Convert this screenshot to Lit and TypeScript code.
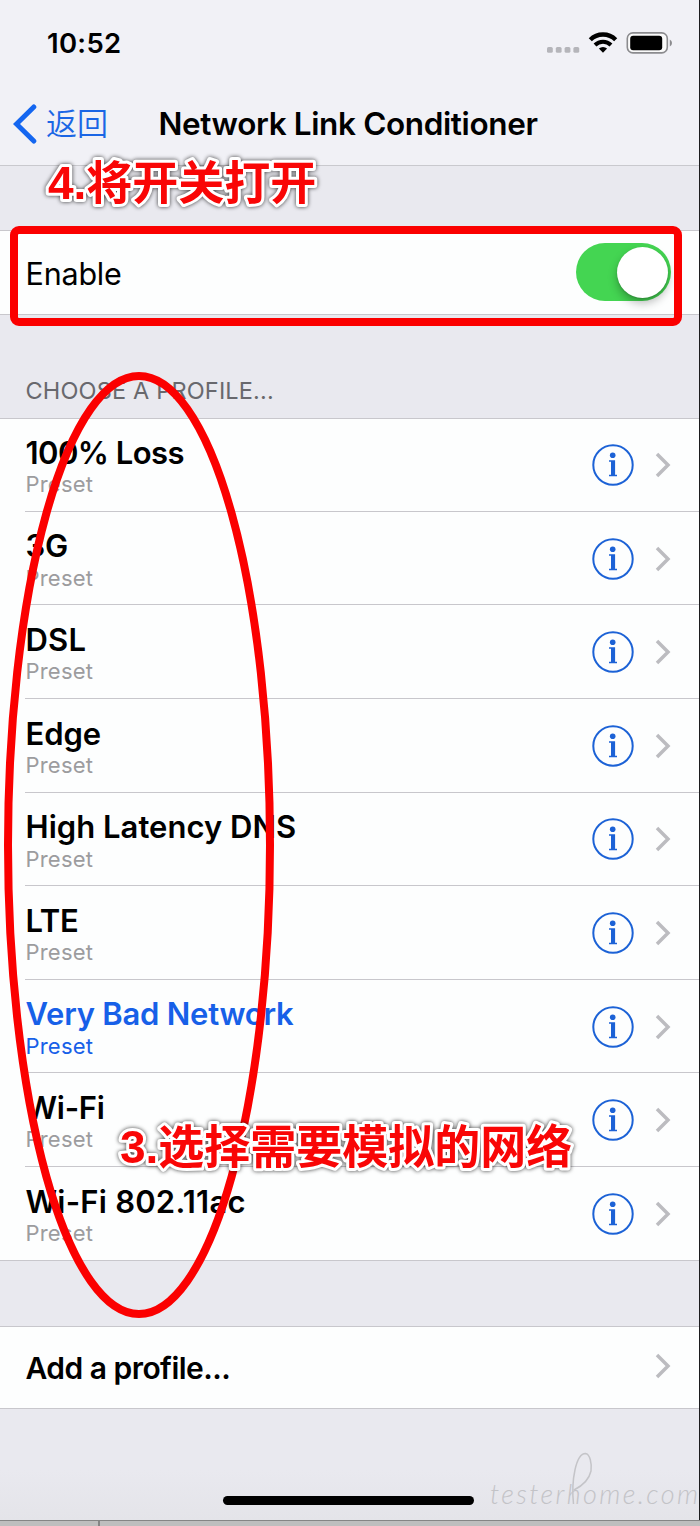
import { LitElement, html, css, svg } from "lit";
import { customElement, property } from "lit/decorators.js";
import { styleMap } from "lit/directives/style-map.js";

interface Profile {
  name: string;
  tracking: number;
  selected?: boolean;
}

const PROFILES: Profile[] = [
  { name: "100% Loss", tracking: -0.55 },
  { name: "3G", tracking: -0.1 },
  { name: "DSL", tracking: 0.2 },
  { name: "Edge", tracking: -0.1 },
  { name: "High Latency DNS", tracking: 0.03 },
  { name: "LTE", tracking: -0.3 },
  { name: "Very Bad Network", tracking: -0.23, selected: true },
  { name: "Wi-Fi", tracking: -0.3 },
  { name: "Wi-Fi 802.11ac", tracking: 0.22 },
];

const chevron = html`<svg class="chevron" width="16" height="26" viewBox="0 0 16 26">
  <path d="M2 2 L13 13 L2 24" fill="none" stroke="#bcbcc0" stroke-width="3.5" />
</svg>`;

@customElement("profile-row")
class ProfileRow extends LitElement {
  @property({ attribute: false }) profile!: Profile;

  static styles = css`
    :host {
      display: flex;
      box-sizing: border-box;
      height: 93.6px;
      padding-left: 25px;
    }
    .line {
      flex: 1;
      display: flex;
      align-items: center;
      border-bottom: 1px solid #c8c7cc;
      padding-right: 28px;
    }
    :host([last]) .line {
      border-bottom-color: transparent;
    }
    .text {
      flex: 1;
      padding: 4px 0 0 0.5px;
    }
    .name {
      font-size: 31px;
      line-height: 36px;
      font-weight: 600;
      white-space: nowrap;
    }
    .kind {
      font-size: 22px;
      line-height: 28px;
      margin-top: -0.6px;
      letter-spacing: 0.2px;
      color: #9c9c9e;
    }
    .selected,
    .selected .kind {
      color: #1760e8;
    }
    svg {
      display: block;
      margin-top: 1.2px;
    }
    .info {
      margin-right: 21px;
    }
  `;

  render() {
    const p = this.profile;
    return html`<div class="line">
      <div class="text ${p.selected ? "selected" : ""}">
        <div class="name" style=${styleMap({ letterSpacing: `${p.tracking}px` })}>${p.name}</div>
        <div class="kind">Preset</div>
      </div>
      <svg class="info" width="42" height="42" viewBox="0 0 42 42">
        <circle cx="21" cy="21" r="19.7" fill="none" stroke="#1c62d6" stroke-width="2" />
        <circle cx="20.7" cy="11.3" r="2.8" fill="#1c62d6" />
        <path d="M17 16.3H23.1V30.8H25V32.3H17V30.8H19V17.8H17Z" fill="#1c62d6" />
      </svg>
      ${chevron}
    </div>`;
  }
}

@customElement("app-root")
class AppRoot extends LitElement {
  static styles = css`
    :host {
      display: block;
      position: relative;
      box-sizing: border-box;
      width: 700px;
      height: 1526px;
      overflow: hidden;
      background: #e9e9ef;
      color: #000;
      font-family: Inter, "Noto Sans CJK SC", sans-serif;
    }
    .screen {
      display: flex;
      flex-direction: column;
      box-sizing: border-box;
      height: 1520px;
      border-right: 1px solid #1c1c1e;
    }
    .top {
      box-sizing: border-box;
      height: 166px;
      background: #f1f1f6;
      border-bottom: 1px solid #c9c9ce;
    }
    .status {
      box-sizing: border-box;
      height: 82px;
      padding: 4px 26px 0 47px;
      display: flex;
      align-items: center;
      justify-content: space-between;
    }
    .time {
      font-size: 27.5px;
      font-weight: 600;
      letter-spacing: 0.3px;
    }
    .nav {
      display: grid;
      grid-template-columns: 158.5px 1fr;
      height: 83px;
      align-items: center;
    }
    .back {
      display: flex;
      align-items: center;
      gap: 9px;
      padding-left: 13px;
      color: #1b66e5;
      font-family: "Noto Sans CJK SC", sans-serif;
      font-size: 31px;
      font-weight: 350;
      line-height: 40px;
    }
    .back-text {
      padding-bottom: 4px;
    }
    .title {
      font-size: 31.5px;
      font-weight: 600;
      letter-spacing: -0.37px;
      white-space: nowrap;
    }
    .group {
      background: #fdfefe;
      border-top: 1px solid #c8c7cc;
      border-bottom: 1px solid #c8c7cc;
      box-sizing: border-box;
      flex: none;
    }
    .enable {
      margin-top: 64px;
      height: 85px;
      padding: 0 28px 0 25.5px;
      display: flex;
      align-items: center;
      justify-content: space-between;
      font-size: 30.5px;
    }
    .enable-text {
      padding-top: 1px;
      letter-spacing: -0.2px;
    }
    .switch {
      box-sizing: border-box;
      width: 95.5px;
      height: 58px;
      border-radius: 29px;
      background: #44d552;
      padding: 4px 3.5px 4px 4px;
      display: flex;
      justify-content: flex-end;
      margin-bottom: 1px;
    }
    .knob {
      width: 51px;
      height: 51px;
      border-radius: 50%;
      background: #fff;
      box-shadow: 0 5px 10px rgba(0, 0, 0, 0.28), 0 1px 2px rgba(0, 0, 0, 0.15);
    }
    .header {
      box-sizing: border-box;
      height: 103px;
      padding: 61px 0 0 25.5px;
      font-size: 23.5px;
      letter-spacing: 0.17px;
      line-height: 30px;
      color: #68686d;
      flex: none;
    }
    .list {
      height: 843px;
      overflow: hidden;
    }
    .rows {
      margin-top: -0.8px;
    }
    .add {
      margin-top: 65px;
      height: 83px;
      padding: 0 28px 3px 25.5px;
      display: flex;
      align-items: center;
      justify-content: space-between;
      font-size: 30px;
      font-weight: 600;
    }
    .add-text {
      letter-spacing: -0.53px;
      padding-top: 3px;
    }
    .foot {
      flex: 1;
      display: grid;
      grid-template-columns: 223px 251px 1fr;
      align-items: end;
      background: linear-gradient(#e9e9ef 55%, #e4e4e9);
    }
    .home {
      grid-column: 2;
      height: 9px;
      border-radius: 5px;
      background: #000;
      margin-bottom: 15px;
    }
    .desk {
      box-sizing: border-box;
      height: 6px;
      border-top: 1px solid #858585;
      background: linear-gradient(90deg, transparent 98px, #858585 98px, #858585 100px, transparent 100px) #bebebe;
    }
    .marks {
      position: absolute;
      left: 0;
      top: 0;
    }
    .callout {
      font-family: "Liberation Sans", "Noto Sans CJK SC", sans-serif;
      font-weight: 700;
      font-size: 46px;
      fill: #f90606;
      stroke: #fff;
      stroke-width: 6px;
      stroke-linejoin: round;
      paint-order: stroke fill;
      filter: drop-shadow(0 0.5px 2px rgba(0, 0, 0, 0.75));
    }
    .water {
      font-family: Lato, sans-serif;
      font-weight: 300;
      font-style: italic;
      font-size: 27px;
      fill: #c3c3c7;
    }
    svg {
      display: block;
    }
  `;

  render() {
    return html`
      <div class="screen">
        <div class="top">
          <div class="status">
            <span class="time">10:52</span>
            <svg width="126" height="26" viewBox="0 0 126 26">
              <g fill="#b5b5ba">
                ${[0, 8.8, 17.6, 26.4].map((x) => svg`<rect x=${x} y="17" width="5.8" height="5.8" rx="1.6" />`)}
              </g>
              <g fill="none" stroke="#000">
                <path d="M43.3 9.8 A18 18 0 0 1 68.7 9.8" stroke-width="4.4" />
                <path d="M48 15 A11.5 11.5 0 0 1 64 15" stroke-width="4" />
              </g>
              <path d="M51.9 18.6 A6 6 0 0 1 60.1 18.6 L56 22.8Z" fill="#000" />
              <rect x="80.3" y="2.9" width="40" height="20" rx="5.6" fill="#fafafa" stroke="#8b8b8e" stroke-width="1.6" />
              <rect x="83.2" y="5.8" width="32" height="14.4" rx="3" fill="#000" />
              <path d="M122.8 9.5 Q125 10.5 125 13 Q125 15.5 122.8 16.5Z" fill="#8b8b8e" />
            </svg>
          </div>
          <div class="nav">
            <div class="back">
              <svg width="24" height="40" viewBox="0 0 24 40">
                <path d="M20.8 3 L3.5 20 L20.8 37" fill="none" stroke="#1466f0" stroke-width="5" stroke-linecap="round" stroke-linejoin="miter" />
              </svg>
              <span class="back-text">返回</span>
            </div>
            <div class="title">Network Link Conditioner</div>
          </div>
        </div>
        <div class="group enable">
          <span class="enable-text">Enable</span>
          <div class="switch"><div class="knob"></div></div>
        </div>
        <div class="header">CHOOSE A PROFILE...</div>
        <div class="group list">
          <div class="rows">
            ${PROFILES.map((p, i) => html`<profile-row .profile=${p} ?last=${i === PROFILES.length - 1}></profile-row>`)}
          </div>
        </div>
        <div class="group add"><span class="add-text">Add a profile...</span>${chevron}</div>
        <div class="foot"><div class="home"></div></div>
      </div>
      <div class="desk"></div>
      <svg class="marks" width="700" height="1526" viewBox="0 0 700 1526">
        <text class="water" x="490" y="1503.5" textLength="208">testerhome.com</text>
        <path d="M573.5 1504 C571 1480 576 1453.5 585.5 1453.5 C590 1454 592 1464 591 1471 C589 1480 582 1486 574 1490" fill="none" stroke="#c4c4c8" stroke-width="1.5" />
        <rect x="14" y="230" width="664" height="92" rx="5" fill="none" stroke="#fb0000" stroke-width="8" />
        <ellipse cx="139" cy="845" rx="131" ry="469" fill="none" stroke="#fb0000" stroke-width="8" />
        <text class="callout" x="48" y="198.5">4.将开关打开</text>
        <text class="callout" x="120" y="1162.5">3.选择需要模拟的网络</text>
      </svg>
    `;
  }
}
